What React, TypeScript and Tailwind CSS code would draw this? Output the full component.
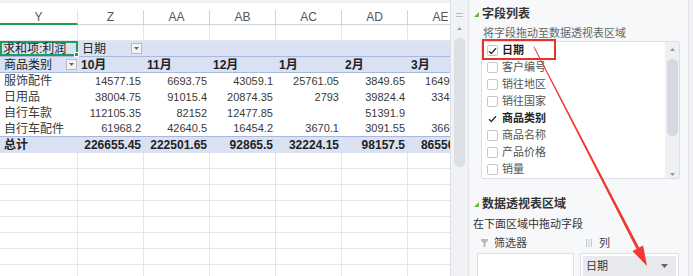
import React from "react";

const cols = ["Y", "Z", "AA", "AB", "AC", "AD", "AE"];
const months = ["10月", "11月", "12月", "1月", "2月", "3月"];

const data: [string, string[]][] = [
  ["服饰配件", ["14577.15", "6693.75", "43059.1", "25761.05", "3849.65", "16490.35"]],
  ["日用品", ["38004.75", "91015.4", "20874.35", "2793", "39824.4", "33490.5"]],
  ["自行车款", ["112105.35", "82152", "12477.85", "", "51391.9", ""]],
  ["自行车配件", ["61968.2", "42640.5", "16454.2", "3670.1", "3091.55", "3660.85"]],
];
const totals = ["226655.45", "222501.65", "92865.5", "32224.15", "98157.5", "86550.85"];

const fields = [
  { name: "日期", checked: true, boxed: true },
  { name: "客户编号" },
  { name: "销往地区" },
  { name: "销往国家" },
  { name: "商品类别", checked: true },
  { name: "商品名称" },
  { name: "产品价格" },
  { name: "销量" },
  { name: "销售额" },
];

const font = "font-['Liberation_Sans','Noto_Sans_CJK_SC',sans-serif]";

const colWidth = (i: number) => (i === 0 ? "w-[78px]" : "w-[66px]");

const Dropdown = () => (
  <div className="flex h-[11px] w-[11px] shrink-0 items-center justify-center border border-[#b9bcc2] bg-[#f4f4f4]">
    <svg width="5" height="3" viewBox="0 0 5 3">
      <path d="M0 0h5L2.5 3z" fill="#666" />
    </svg>
  </div>
);

const EmptyRow = () => (
  <div className="flex h-4 shrink-0 border-b border-[#e3e6ed]">
    {cols.map((c, i) => (
      <div key={c} className={`${colWidth(i)} shrink-0 border-r border-[#e3e6ed]`} />
    ))}
  </div>
);

// the AE column runs past the sheet's right edge, like the real grid
const Sheet = () => (
  <div className="flex w-[450px] shrink-0 flex-col overflow-hidden bg-white">
    <div className="h-[10px] shrink-0 border-t-[3px] border-[#efefef] bg-white" />
    <div className="flex h-[15px] shrink-0 bg-white">
      {cols.map((c, i) => (
        <div
          key={c}
          className={`${colWidth(i)} flex shrink-0 items-center justify-center border-r text-[12px] leading-none text-[#555] ${
            i === 0 ? "border-b-2 border-r-[#dfe2e8] border-b-[#1e9e5a]" : "border-b border-[#cfd3da]"
          }`}
        >
          {c}
        </div>
      ))}
    </div>
    <EmptyRow />

    <div className="flex h-4 shrink-0 border-b border-[#a9b9de] bg-[#d9e1f2] text-[12px] text-[#222]">
      <div className="relative flex w-[78px] shrink-0 items-center whitespace-nowrap border-2 border-[#1e9e5a] pl-[1px]">
        求和项:利润
        <div className="absolute -bottom-[3px] -right-[3px] h-[5px] w-[5px] border border-white bg-[#1e9e5a]" />
      </div>
      <div className="flex w-[66px] shrink-0 items-center justify-between pl-[4px] pr-[2px]">
        日期
        <Dropdown />
      </div>
    </div>
    <div className="flex h-4 shrink-0 border-b border-[#a9b9de] bg-[#d9e1f2] text-[12px] font-bold text-[#222]">
      <div className="flex w-[78px] shrink-0 items-center justify-between pl-[4px] pr-[1px] font-normal">
        商品类别
        <Dropdown />
      </div>
      {months.map((m) => (
        <div key={m} className="flex w-[66px] shrink-0 items-center pl-[3px]">
          {m}
        </div>
      ))}
    </div>

    {data.map(([name, vals], r) => (
      <div
        key={name}
        className={`flex h-4 shrink-0 text-[#3a3a3a] ${r === data.length - 1 ? "border-b border-[#a9b9de]" : ""}`}
      >
        <div className="flex w-[78px] shrink-0 items-center pl-[4px] text-[12px]">{name}</div>
        {vals.map((v, i) => (
          <div key={i} className="flex w-[66px] shrink-0 items-center justify-end pr-[3px] text-[11px]">
            {v}
          </div>
        ))}
      </div>
    ))}
    <div className="flex h-4 shrink-0 bg-[#d9e1f2] text-[12px] font-bold text-[#222]">
      <div className="flex w-[78px] shrink-0 items-center pl-[4px]">总计</div>
      {totals.map((v, i) => (
        <div key={i} className="flex w-[66px] shrink-0 items-center justify-end pr-[3px]">
          {v}
        </div>
      ))}
    </div>
    {Array.from({ length: 8 }).map((_, i) => (
      <EmptyRow key={i} />
    ))}
  </div>
);

const SheetScroll = () => (
  <div className="flex w-[18px] shrink-0 flex-col items-center border-l border-[#dcdfe4] bg-[#f1f2f4]">
    <div className="mt-[13px] flex flex-col gap-[2px]">
      <div className="h-px w-[7px] bg-[#b8bcc4]" />
      <div className="h-px w-[7px] bg-[#b8bcc4]" />
    </div>
    <svg className="mt-[10px]" width="5" height="3" viewBox="0 0 5 3">
      <path d="M0 3h5L2.5 0z" fill="#9aa0aa" />
    </svg>
    <div className="mt-[8px] h-[129px] w-[11px] rounded-[5px] bg-[#dcdfe4]" />
  </div>
);

const Check = () => (
  <svg width="9" height="8" viewBox="0 0 9 8">
    <path d="M1 4.2l2.3 2.3L8 1.2" fill="none" stroke="#333" strokeWidth="1.4" />
  </svg>
);

const Triangle = () => (
  <svg width="5" height="5" viewBox="0 0 5 5">
    <path d="M5 0v5H0z" fill="#6fb34f" />
  </svg>
);

const Panel = () => (
  <div className="flex w-[220px] shrink-0 flex-col border-l border-[#e2e4e8] bg-[#f7f8fa]">
    <div className="mt-[6px] flex h-4 items-center gap-[3px] pl-[5px]">
      <Triangle />
      <span className="text-[12px] font-bold text-[#333]">字段列表</span>
    </div>
    <div className="mt-[4px] h-[14px] pl-[14px] text-[11px] leading-[14px] text-[#666]">将字段拖动至数据透视表区域</div>
    <div className="ml-[12px] mt-[1px] flex h-[142px] w-[199px] overflow-hidden rounded-[2px] border border-[#dcdee3] bg-white">
      <div className="flex flex-1 flex-col overflow-hidden pl-[5px]">
        {fields.map((f) => (
          <div key={f.name} className="flex h-[17px] shrink-0 items-center gap-[4px]">
            <div
              className={`flex h-[11px] w-[11px] shrink-0 items-center justify-center rounded-[2px] ${
                f.checked && !f.boxed ? "" : "border border-[#c3c6cc] bg-white"
              }`}
            >
              {f.checked ? <Check /> : null}
            </div>
            <span className={`text-[11px] ${f.checked ? "font-bold text-[#222]" : "text-[#555]"}`}>{f.name}</span>
          </div>
        ))}
      </div>
      <div className="flex w-[14px] shrink-0 flex-col items-center bg-[#eef0f3]">
        <svg className="mt-[6px]" width="5" height="3" viewBox="0 0 5 3">
          <path d="M0 3h5L2.5 0z" fill="#8f96a3" />
        </svg>
        <div className="mt-[8px] h-[77px] w-[11px] rounded-[5px] bg-[#d6d9df]" />
        <svg className="mt-[37px]" width="5" height="3" viewBox="0 0 5 3">
          <path d="M0 0h5L2.5 3z" fill="#8f96a3" />
        </svg>
      </div>
    </div>
    <div className="mt-[17px] flex h-4 items-center gap-[3px] pl-[5px]">
      <Triangle />
      <span className="text-[12px] font-bold text-[#333]">数据透视表区域</span>
    </div>
    <div className="mt-[5px] h-[14px] pl-[4px] text-[11px] leading-[14px] text-[#333]">在下面区域中拖动字段</div>
    <div className="mt-[5px] flex h-[14px] items-center text-[11px] text-[#444]">
      <div className="flex w-[111px] items-center gap-[6px] pl-[12px]">
        <svg width="7" height="8" viewBox="0 0 7 8">
          <path d="M0 0h7v1.5L4.5 4v4h-2V4L0 1.5z" fill="#b5b9c0" />
        </svg>
        筛选器
      </div>
      <div className="flex items-center gap-[7px] pl-[6px]">
        <svg width="6" height="8" viewBox="0 0 6 8">
          <path d="M0 0h1v8H0zM2.5 0h1v8h-1zM5 0h1v8H5z" fill="#c2c5cb" />
        </svg>
        列
      </div>
    </div>
    <div className="mt-[3px] flex flex-1 gap-[6px] pl-[8px]">
      <div className="w-[97px] rounded-t-[2px] border border-b-0 border-[#dcdee3] bg-white" />
      <div className="w-[99px] rounded-t-[2px] border border-b-0 border-[#dcdee3] bg-white px-[2px] pt-[2px]">
        <div className="flex h-[20px] items-center justify-between bg-[#e8e9ed] pl-[3px] pr-[8px] text-[11px] text-[#333]">
          日期
          <svg width="7" height="4" viewBox="0 0 7 4">
            <path d="M0 0h7L3.5 4z" fill="#666" />
          </svg>
        </div>
      </div>
    </div>
  </div>
);

export default function App() {
  return (
    <div className={`relative flex h-[276px] w-[693px] overflow-hidden bg-white ${font}`}>
      <Sheet />
      <SheetScroll />
      <Panel />
      <div className="w-[5px] shrink-0 border-l border-[#e0e2e6] bg-[#f0f1f3]" />

      {/* red box + arrow drawn over the screenshot */}
      <div className="pointer-events-none absolute left-[482px] top-[39px] h-[21px] w-[74px] border-2 border-[#e8332d]" />
      <svg className="pointer-events-none absolute left-0 top-0" width="693" height="276" viewBox="0 0 693 276">
        <polygon
          points="534.4,46.8 639.1,247.5 643.1,245.4 647,266 632.5,251 636.5,248.9 533.6,47.2"
          fill="#ee3a30"
        />
      </svg>
    </div>
  );
}
